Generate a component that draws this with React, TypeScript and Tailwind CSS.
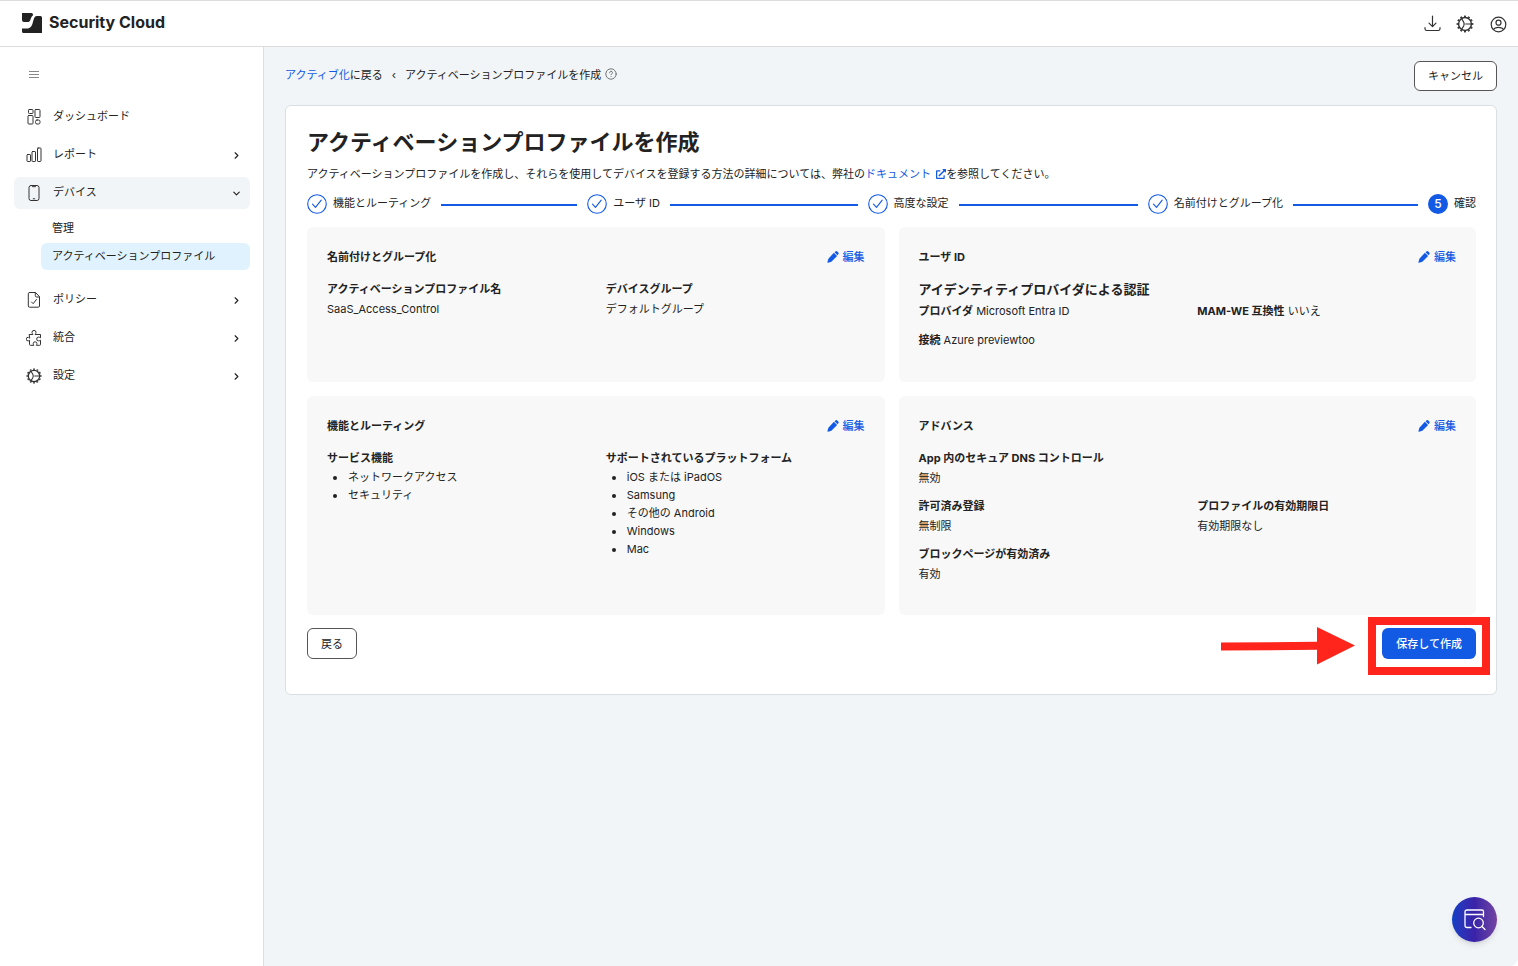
import React from "react";
import { ChevronDown, ChevronRight } from "lucide-react";
import { FaExternalLinkAlt } from "react-icons/fa";

interface IconProps {
  className?: string;
}

const line = {
  fill: "none",
  stroke: "currentColor",
  strokeLinecap: "round" as const,
  strokeLinejoin: "round" as const,
};

function LogoMark() {
  return (
    <svg viewBox="0 0 20 20" className="size-5 text-[#222]" fill="currentColor" aria-hidden="true">
      <path d="M0 0h9.5q1.5 0 1.5 1.5v.8C9.400 3.400 8.900 5.300 8.300 7 7.800 8.400 7 9 5.500 9H2Q0 9 0 7z" />
      <path d="M15 3h3.500q1.500 0 1.500 1.500V20H1.500Q0 20 0 18.500V15.500h4.500c3.500 0 5-1.500 6-5l1-3.500C12.300 4.300 13 3 15 3z" />
    </svg>
  );
}

function DashboardIcon({ className }: IconProps) {
  return (
    <svg viewBox="0 0 16 16" className={className} {...line} aria-hidden="true">
      <rect x="2.500" y="0.500" width="4.500" height="4" rx="0.800" />
      <rect x="2" y="6.500" width="5" height="8.500" rx="0.800" />
      <rect x="9" y="0.500" width="5" height="8" rx="0.800" />
      <rect x="9.500" y="11" width="4.500" height="4" rx="1.500" />
    </svg>
  );
}

function ReportIcon({ className }: IconProps) {
  return (
    <svg viewBox="0 0 16 16" className={className} {...line} aria-hidden="true">
      <rect x="1" y="7.500" width="3.500" height="7" rx="0.600" />
      <rect x="6" y="4.500" width="3.500" height="10" rx="0.600" />
      <rect x="11.500" y="1" width="3.500" height="13.500" rx="0.600" />
    </svg>
  );
}

function PhoneIcon({ className }: IconProps) {
  return (
    <svg viewBox="0 0 16 16" className={className} {...line} aria-hidden="true">
      <rect x="3" y="0.500" width="10" height="15" rx="2" />
      <path d="M6 .8l.6.9h2.800l.6-.9M7.200 13.800h1.600" />
    </svg>
  );
}

function PolicyIcon({ className }: IconProps) {
  return (
    <svg viewBox="0 0 16 16" className={className} {...line} aria-hidden="true">
      <path d="M3.500.5h6l4 4.200v9.300q0 1.200-1.200 1.200H3.500q-1.200 0-1.200-1.200V1.700q0-1.200 1.200-1.200z" />
      <path d="M9.300.8v2.800q0 1.400 1.400 1.400h2.600M5.500 10l1.700 1.700 3.200-4.200" />
    </svg>
  );
}

function PuzzleIcon({ className }: IconProps) {
  return (
    <svg viewBox="0 0 16 16" className={className} {...line} aria-hidden="true">
      <path d="M3.500 4.500h3.400C6.300 3.600 6 3 6 2.400a2 2 0 0 1 4 0c0 .6-.3 1.200-.9 2.100h5.400v3.300c-.8-.5-1.400-.7-1.900-.7a1.900 1.900 0 0 0 0 3.800c.5 0 1.100-.2 1.900-.7v4.300q0 .8-.8.8h-3.400c.6-.8.7-1.200.7-1.600a1.900 1.900 0 0 0-3.800 0c0 .4.1.8.700 1.600H4.300q-.8 0-.8-.8v-4.300c-.7.600-1.100.7-1.500.7a1.700 1.700 0 0 1 0-3.600c.4 0 .8.1 1.500.7z" />
    </svg>
  );
}

function GearIcon({ className }: IconProps) {
  return (
    <svg viewBox="0 0 16 16" className={className} fill="none" stroke="currentColor" aria-hidden="true">
      <circle cx="8" cy="8" r="5.700" strokeWidth="1.300" />
      <circle cx="8" cy="8" r="6.800" strokeWidth="1.300" pathLength="48" strokeDasharray="2 2" strokeDashoffset="1" />
      <path d="M8.300 8h5.400M5 3.300L6.800 6.200Q7.800 8 6.800 9.800L5 12.700" strokeWidth="1.100" />
    </svg>
  );
}

function DownloadIcon() {
  return (
    <svg viewBox="0 0 18 18" className="size-[18px]" {...line} strokeWidth="1.200" aria-hidden="true">
      <path d="M9.500 1v10.500M6 8.200l3.500 3.500L13 8.200M2 12.700v1q0 1.800 1.800 1.800h11.400q1.800 0 1.800-1.800v-1" />
    </svg>
  );
}

function UserIcon() {
  return (
    <svg viewBox="0 0 18 18" className="size-[18px]" {...line} strokeWidth="1.200" aria-hidden="true">
      <circle cx="9.500" cy="9.500" r="7.300" />
      <circle cx="9.500" cy="7.700" r="2.500" />
      <path d="M4.500 14.500c.8-1.700 2.200-2.200 5-2.200s4.200.5 5 2.200" />
    </svg>
  );
}

function PencilIcon() {
  return (
    <svg viewBox="0 0 12 12" className="size-3" fill="currentColor" aria-hidden="true">
      <path d="M6.900 1.700l3.200 3.200-5.700 5.900-3.300.9q-.8.200-.6-.6l.9-3.400z" />
      <path d="M7.500 1.200L8.400.4q1-.8 1.900.1l.9.900q.9.900.1 1.900l-.8.900z" />
    </svg>
  );
}

function HelpIcon() {
  return (
    <svg viewBox="0 0 12 12" className="size-3 text-[#666]" {...line} strokeWidth="0.900" aria-hidden="true">
      <circle cx="6" cy="6" r="5.200" />
      <path d="M4.600 4.800c0-1 .6-1.500 1.400-1.500s1.500.5 1.500 1.300c0 1-1.400 1.100-1.400 2.100M6.100 8.500v.1" />
    </svg>
  );
}

interface NavItem {
  label: string;
  icon: React.ComponentType<IconProps>;
  chevron?: boolean;
  children?: string[];
}

const navItems: NavItem[] = [
  { label: "ダッシュボード", icon: DashboardIcon },
  { label: "レポート", icon: ReportIcon, chevron: true },
  { label: "デバイス", icon: PhoneIcon, chevron: true, children: ["管理", "アクティベーションプロファイル"] },
  { label: "ポリシー", icon: PolicyIcon, chevron: true },
  { label: "統合", icon: PuzzleIcon, chevron: true },
  { label: "設定", icon: GearIcon, chevron: true },
];

const steps = ["機能とルーティング", "ユーザ ID", "高度な設定", "名前付けとグループ化", "確認"];

function Sidebar() {
  return (
    <aside className="w-[264px] shrink-0 border-r border-[#dcdfe1] bg-white pl-3.5 pr-[13px]">
      <button type="button" aria-label="メニュー" className="ml-[15px] mt-[21px] flex h-3 w-2.5 flex-col justify-center gap-0.5">
        <span className="h-px w-full bg-[#888]" />
        <span className="h-px w-full bg-[#888]" />
        <span className="h-px w-full bg-[#888]" />
      </button>
      <nav className="mt-[21px] flex flex-col gap-1.5">
        {navItems.map(({ label, icon: Icon, chevron, children }) => (
          <div key={label}>
            <button
              type="button"
              className={`flex h-8 w-full items-center rounded-md pl-3 pr-2 ${children ? "bg-[#f1f5f7]" : ""}`}
            >
              <Icon className="size-4 shrink-0 text-[#333]" />
              <span className="ml-[11px] flex-1 pb-[3px] text-left">{label}</span>
              {chevron && (children ? <ChevronDown size={11} strokeWidth={2.5} /> : <ChevronRight size={11} strokeWidth={2.5} />)}
            </button>
            {children && (
              <ul className="mb-2 ml-[27px] mt-1.5 flex flex-col gap-px">
                {children.map((child, i) => (
                  <li key={child}>
                    <a href="#" className={`flex h-[27px] items-center rounded-md pb-0.5 pl-[11px] ${i === 1 ? "bg-[#e0f2fe]" : ""}`}>
                      {child}
                    </a>
                  </li>
                ))}
              </ul>
            )}
          </div>
        ))}
      </nav>
    </aside>
  );
}

function Stepper() {
  return (
    <ol className="mt-2.5 flex h-5">
      {steps.map((step, i) => {
        const last = i === steps.length - 1;
        return (
          <li key={step} className={`flex items-center ${last ? "" : "flex-1"}`}>
            {last ? (
              <span className="flex size-5 items-center justify-center rounded-full bg-[#1259e3] text-xs font-medium text-white">5</span>
            ) : (
              <svg viewBox="0 0 20 20" className="size-5 shrink-0 text-[#1259e3]" {...line} strokeWidth="1.100" aria-hidden="true">
                <circle cx="10" cy="10" r="9.300" />
                <path d="M5.500 10.200l3 3.200L14.200 6.200" />
              </svg>
            )}
            <span className="ml-1.5 whitespace-nowrap pb-0.5">{step}</span>
            {!last && <span className="mx-2.5 mt-0.5 h-0.5 flex-1 bg-[#1259e3]" />}
          </li>
        );
      })}
    </ol>
  );
}

function Panel({ title, className = "", children }: { title: string; className?: string; children: React.ReactNode }) {
  return (
    <section className={`rounded-md bg-[#f8f8f8] px-5 pt-5 ${className}`}>
      <div className="flex items-center justify-between">
        <h2 className="font-bold">{title}</h2>
        <a href="#" className="flex items-center gap-1 font-medium text-[#1259e3]">
          <PencilIcon />
          編集
        </a>
      </div>
      {children}
    </section>
  );
}

function Field({ label, children }: { label: string; children: React.ReactNode }) {
  return (
    <div>
      <dt className="font-bold">{label}</dt>
      <dd>{children}</dd>
    </div>
  );
}

function BulletList({ items }: { items: string[] }) {
  return (
    <ul className="list-disc pl-5 leading-[18px]">
      {items.map((item) => (
        <li key={item} className="pl-px">{item}</li>
      ))}
    </ul>
  );
}

export default function App() {
  return (
    <div className="flex min-h-screen flex-col bg-white font-['Inter','Noto_Sans_CJK_JP',sans-serif] text-[11px] leading-5 text-[#222]">
      <header className="flex h-[47px] items-center justify-between border-y border-[#dcdcdc] bg-white pl-[22px] pr-[11px]">
        <div className="flex gap-[7px] pb-0.5">
          <LogoMark />
          <span className="pb-0.5 text-base font-bold leading-[18px]">Security Cloud</span>
        </div>
        <div className="flex items-center gap-[15px] text-[#333]">
          <button type="button" aria-label="ダウンロード"><DownloadIcon /></button>
          <button type="button" aria-label="設定"><GearIcon className="size-[18px]" /></button>
          <button type="button" aria-label="アカウント"><UserIcon /></button>
        </div>
      </header>

      <div className="flex flex-1">
        <Sidebar />

        <main className="min-w-0 flex-1 rounded-br-lg bg-[#f1f5f7] px-[21px] pt-3.5">
          <div className="flex items-start justify-between">
            <div className="flex items-center pt-1">
              <a href="#" className="text-[#1259e3]">アクティブ化</a>に戻る
              <span className="mx-[9px]">‹</span>
              アクティベーションプロファイルを作成
              <span className="ml-1 pb-0.5"><HelpIcon /></span>
            </div>
            <button type="button" className="h-[30px] rounded-md border border-[#555] bg-white px-[13px] leading-7">
              キャンセル
            </button>
          </div>

          <div className="mt-3.5 rounded-md border border-[#dcdfe1] bg-white pb-[35px] pl-[21px] pr-5 pt-5">
            <h1 className="text-[22px] font-bold leading-8">アクティベーションプロファイルを作成</h1>
            <p className="mt-1.5">
              アクティベーションプロファイルを作成し、それらを使用してデバイスを登録する方法の詳細については、弊社の
              <a href="#" className="text-[#1259e3]">
                ドキュメント <FaExternalLinkAlt className="ml-0.5 inline size-2.5 align-[-1px]" />
              </a>
              を参照してください。
            </p>

            <Stepper />

            <div className="mt-[13px] grid grid-cols-2 gap-3.5">
              <Panel title="名前付けとグループ化" className="min-h-[155px]">
                <dl className="mt-3 grid grid-cols-2 gap-x-5">
                  <Field label="アクティベーションプロファイル名">SaaS_Access_Control</Field>
                  <Field label="デバイスグループ">デフォルトグループ</Field>
                </dl>
              </Panel>

              <Panel title="ユーザ ID">
                <h3 className="mt-2.5 text-[13px] font-bold leading-6">アイデンティティプロバイダによる認証</h3>
                <div className="grid grid-cols-2 gap-x-5 gap-y-[9px]">
                  <p><b>プロバイダ</b> Microsoft Entra ID</p>
                  <p><b>MAM-WE 互換性</b> いいえ</p>
                  <p><b>接続</b> Azure previewtoo</p>
                </div>
              </Panel>

              <Panel title="機能とルーティング" className="min-h-[219px]">
                <dl className="mt-3 grid grid-cols-2 gap-x-5">
                  <Field label="サービス機能">
                    <BulletList items={["ネットワークアクセス", "セキュリティ"]} />
                  </Field>
                  <Field label="サポートされているプラットフォーム">
                    <BulletList items={["iOS または iPadOS", "Samsung", "その他の Android", "Windows", "Mac"]} />
                  </Field>
                </dl>
              </Panel>

              <Panel title="アドバンス">
                <dl className="mt-3 grid grid-cols-2 gap-x-5 gap-y-2">
                  <div className="col-span-2">
                    <Field label="App 内のセキュア DNS コントロール">無効</Field>
                  </div>
                  <Field label="許可済み登録">無制限</Field>
                  <Field label="プロファイルの有効期限日">有効期限なし</Field>
                  <Field label="ブロックページが有効済み">有効</Field>
                </dl>
              </Panel>
            </div>

            <div className="mt-[13px] flex justify-between">
              <button type="button" className="h-[31px] rounded-md border border-[#555] bg-white px-[13px]">
                戻る
              </button>
              <div className="relative">
                <button type="button" className="h-[31px] rounded-md bg-[#1259e3] px-3.5 font-medium text-white">
                  保存して作成
                </button>
                {/* Highlight frame and arrow pointing at the submit button */}
                <div className="pointer-events-none absolute -bottom-4 -left-3.5 -right-3.5 -top-[11px] border-8 border-[#ff241c]" />
                <svg viewBox="0 0 134 38" className="pointer-events-none absolute -left-[161px] -top-px h-[38px] w-[134px]" fill="#ff241c" aria-hidden="true">
                  <path d="M0 15.500L96 14.800V0l38 18.500L96 37.500V22.800L0 23.500z" />
                </svg>
              </div>
            </div>
          </div>
        </main>
      </div>

      <button
        type="button"
        aria-label="検索"
        className="fixed bottom-6 right-[21px] flex size-[45px] items-center justify-center rounded-full bg-linear-to-r from-[#0a3fc6] via-[#3a22a8] to-[#7443a0] text-white shadow-md"
      >
        <svg viewBox="0 0 24 24" className="size-6" {...line} strokeWidth="1.300" aria-hidden="true">
          <path d="M8 19.500H4q-2 0-2-2V4q0-2 2-2h15q1.500 0 1.500 1.500v5M2 6.500H20.500" />
          <circle cx="15.500" cy="15" r="4.800" />
          <path d="M19 18.500l3 3" />
        </svg>
      </button>
    </div>
  );
}
